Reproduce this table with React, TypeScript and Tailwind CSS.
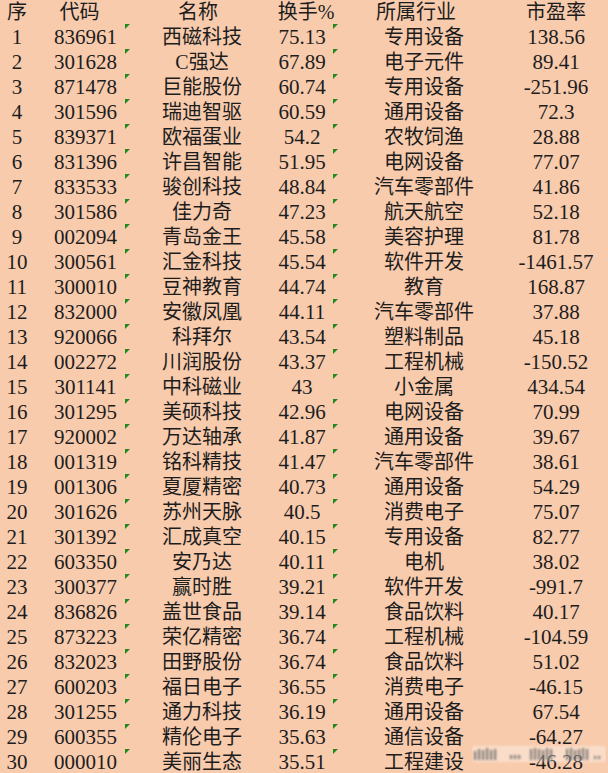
import React from 'react';

type Row = [string, string, string, string, string];

const rows: Row[] = [
    ['836961', '西磁科技', '75.13', '专用设备', '138.56'],
    ['301628', 'C强达', '67.89', '电子元件', '89.41'],
    ['871478', '巨能股份', '60.74', '专用设备', '-251.96'],
    ['301596', '瑞迪智驱', '60.59', '通用设备', '72.3'],
    ['839371', '欧福蛋业', '54.2', '农牧饲渔', '28.88'],
    ['831396', '许昌智能', '51.95', '电网设备', '77.07'],
    ['833533', '骏创科技', '48.84', '汽车零部件', '41.86'],
    ['301586', '佳力奇', '47.23', '航天航空', '52.18'],
    ['002094', '青岛金王', '45.58', '美容护理', '81.78'],
    ['300561', '汇金科技', '45.54', '软件开发', '-1461.57'],
    ['300010', '豆神教育', '44.74', '教育', '168.87'],
    ['832000', '安徽凤凰', '44.11', '汽车零部件', '37.88'],
    ['920066', '科拜尔', '43.54', '塑料制品', '45.18'],
    ['002272', '川润股份', '43.37', '工程机械', '-150.52'],
    ['301141', '中科磁业', '43', '小金属', '434.54'],
    ['301295', '美硕科技', '42.96', '电网设备', '70.99'],
    ['920002', '万达轴承', '41.87', '通用设备', '39.67'],
    ['001319', '铭科精技', '41.47', '汽车零部件', '38.61'],
    ['001306', '夏厦精密', '40.73', '通用设备', '54.29'],
    ['301626', '苏州天脉', '40.5', '消费电子', '75.07'],
    ['301392', '汇成真空', '40.15', '专用设备', '82.77'],
    ['603350', '安乃达', '40.11', '电机', '38.02'],
    ['300377', '赢时胜', '39.21', '软件开发', '-991.7'],
    ['836826', '盖世食品', '39.14', '食品饮料', '40.17'],
    ['873223', '荣亿精密', '36.74', '工程机械', '-104.59'],
    ['832023', '田野股份', '36.74', '食品饮料', '51.02'],
    ['600203', '福日电子', '36.55', '消费电子', '-46.15'],
    ['301255', '通力科技', '36.19', '通用设备', '67.54'],
    ['600355', '精伦电子', '35.63', '通信设备', '-64.27'],
    ['000010', '美丽生态', '35.51', '工程建设', '-46.28'],
];

// little green "number stored as text" flag
function Flag() {
    return (
        <span className="absolute left-0 top-[-1px] h-[5px] w-[5px] bg-[#1e8a1e] [clip-path:polygon(0_0,100%_0,0_100%)]" />
    );
}

// blurry, unreadable watermark in the corner, drawn as smudged strokes
const smudges = [
    [2, 5, 9], [6, 3, 11], [10, 4, 10], [14, 2, 12], [18, 4, 10], [22, 3, 11],
    [38, 9, 4], [42, 9, 4], [46, 9, 4],
    [58, 3, 11], [62, 2, 12], [66, 3, 11], [70, 4, 10], [74, 2, 12], [78, 3, 11],
    [94, 3, 11], [98, 2, 12], [102, 4, 10], [106, 3, 11], [110, 2, 12], [114, 3, 11],
    [122, 10, 3], [126, 10, 3],
];

function Watermark() {
    return (
        <svg className="absolute left-[472px] top-[744px]" width="134" height="20" viewBox="0 0 134 20">
            <defs>
                <filter id="wm-blur">
                    <feGaussianBlur stdDeviation="0.9" />
                </filter>
            </defs>
            <rect x="0" y="2" width="134" height="16" rx="3" fill="#ffffff" opacity="0.35" filter="url(#wm-blur)" />
            <g filter="url(#wm-blur)">
                {smudges.map(([x, y, h], i) => (
                    <rect key={i} x={x} y={y + 2} width="2.2" height={h} fill="#5e5e5e" opacity="0.75" />
                ))}
            </g>
        </svg>
    );
}

export default function App() {
    return (
        <div className="relative h-[773px] w-[608px] overflow-hidden bg-[#f8cbad] font-['Liberation_Serif','Noto_Sans_CJK_SC',serif] text-[20px] leading-[25px] text-[#1d1d1d]">
            {/* Header */}
            <div className="flex h-[25px]">
                <div className="w-[34px] text-center">序</div>
                <div className="w-[91px] text-center">代码</div>
                <div className="w-[154px] pr-[8px] text-center">名称</div>
                <div className="w-[54px] whitespace-nowrap text-center">
                    <span className="-mx-4">换手%</span>
                </div>
                <div className="w-[184px] pr-[18px] text-center">所属行业</div>
                <div className="w-[78px] text-center">市盈率</div>
            </div>

            {rows.map(([code, name, rate, industry, pe], i) => (
                <div key={code + i} className="flex h-[25px] whitespace-nowrap">
                    <div className="w-[34px] text-center text-[21px]">{i + 1}</div>
                    <div className="w-[91px] pl-[12px] text-center text-[21px]">{code}</div>
                    <div className="relative w-[154px] text-center">
                        <Flag />
                        {name}
                    </div>
                    <div className="w-[54px] pr-[8px] text-center text-[21px]">
                        <span className="-mx-4">{rate}</span>
                    </div>
                    <div className="relative w-[184px] pr-[2px] text-center">
                        <Flag />
                        {industry}
                    </div>
                    <div className="w-[78px] text-center text-[21px]">
                        <span className="-mx-4">{pe}</span>
                    </div>
                </div>
            ))}

            <Watermark />
        </div>
    );
}
